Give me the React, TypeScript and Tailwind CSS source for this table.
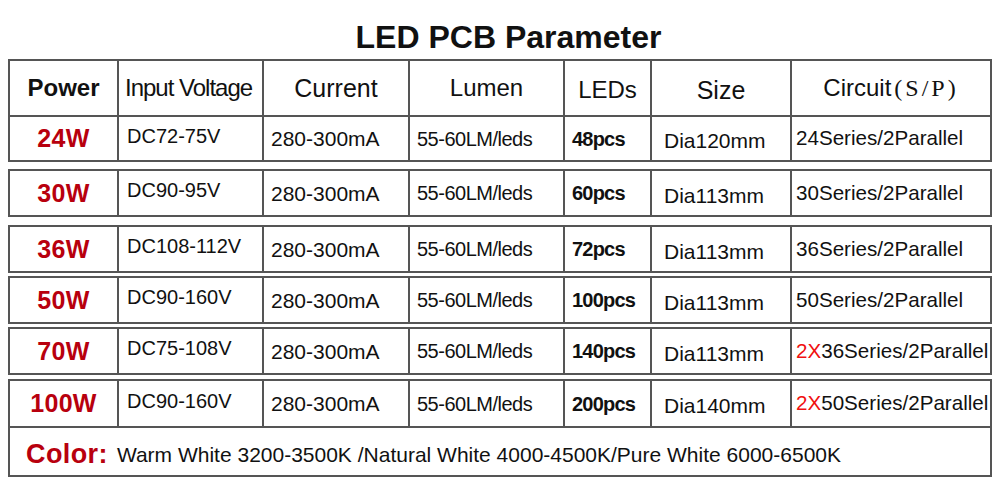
import React from "react";

type Row = { p: string; v: string; leds: string; size: string; c: string; x?: boolean };

const rows: Row[] = [
  { p: "24W", v: "DC72-75V", leds: "48pcs", size: "Dia120mm", c: "24Series/2Parallel" },
  { p: "30W", v: "DC90-95V", leds: "60pcs", size: "Dia113mm", c: "30Series/2Parallel" },
  { p: "36W", v: "DC108-112V", leds: "72pcs", size: "Dia113mm", c: "36Series/2Parallel" },
  { p: "50W", v: "DC90-160V", leds: "100pcs", size: "Dia113mm", c: "50Series/2Parallel" },
  { p: "70W", v: "DC75-108V", leds: "140pcs", size: "Dia113mm", c: "36Series/2Parallel", x: true },
  { p: "100W", v: "DC90-160V", leds: "200pcs", size: "Dia140mm", c: "50Series/2Parallel", x: true },
];

const gridCols = "grid grid-cols-[107px_145px_146px_155px_87px_140px_200px]";
const cell = "flex items-center border-l-2 border-[#555] overflow-hidden whitespace-nowrap";

function DataRow({ r, h }: { r: Row; h: string }) {
  return (
    <div className={`${gridCols} ${h}`}>
      <div className="flex items-center justify-center text-[25px] font-bold text-[#b8000e] leading-none tracking-[0.3px]">
        {r.p}
      </div>
      <div className={`${cell} pl-[8px] pb-[6px] text-[20px] leading-none`}>{r.v}</div>
      <div className={`${cell} pl-[7px] text-[21px] leading-none`}>280-300mA</div>
      <div className={`${cell} pl-[7px] text-[20px] tracking-[-0.5px] leading-none`}>55-60LM/leds</div>
      <div className={`${cell} pl-[7px] text-[20px] font-bold tracking-[-0.8px] leading-none`}>{r.leds}</div>
      <div className={`${cell} pl-[12px] pt-[4px] text-[21px] leading-none`}>{r.size}</div>
      <div className={`${cell} pl-[4px] text-[20.6px] leading-none`}>
        {r.x && <span className="text-[#f01010]">2X</span>}
        {r.c}
      </div>
    </div>
  );
}

export default function App() {
  const margins = ["", "mt-[7px]", "mt-[8px]", "mt-[3px]", "mt-[3px]", "mt-[4px]"];
  return (
    <div className="w-[1000px] h-[497px] bg-white text-[#111] font-['Liberation_Sans',Arial,sans-serif] overflow-hidden">
      <div className="h-[59px] pt-[21px] pl-[17px] text-center text-[32px] leading-[32px] font-bold">
        LED PCB Parameter
      </div>

      {/* Group 1: header + first row */}
      <div className="ml-[8px] w-[984px] border-2 border-[#555]">
        <div className={`${gridCols} h-[56px] border-b-2 border-[#555]`}>
          <div className="flex items-center justify-center text-[24px] font-bold leading-none">Power</div>
          <div className={`${cell} pl-[6px] text-[24px] tracking-[-1px] leading-none`}>Input Voltage</div>
          <div className={`${cell} justify-center text-[25px] leading-none`}>Current</div>
          <div className={`${cell} justify-center text-[24px] leading-none`}>Lumen</div>
          <div className={`${cell} justify-center pt-[4px] text-[24px] leading-none`}>LEDs</div>
          <div className={`${cell} justify-center pt-[4px] text-[25px] leading-none`}>Size</div>
          <div className={`${cell} justify-center text-[24px] leading-none`}>
            <span>Circuit</span>
            <span className="ml-[3px] font-['Liberation_Serif',serif] tracking-[3px]">(S/P)</span>
          </div>
        </div>
        <DataRow r={rows[0]} h="h-[43px]" />
      </div>

      {rows.slice(1, 5).map((r, i) => (
        <div key={r.p} className={`ml-[8px] w-[984px] border-2 border-[#555] ${margins[i + 1]}`}>
          <DataRow r={r} h="h-[44px]" />
        </div>
      ))}

      {/* Last group: final row + color */}
      <div className={`ml-[8px] w-[984px] border-2 border-[#555] ${margins[5]}`}>
        <div className="border-b-2 border-[#555]">
          <DataRow r={rows[5]} h="h-[45px]" />
        </div>
        <div className="h-[47px] flex items-center pl-[16px] pt-[6px] whitespace-nowrap">
          <span className="text-[27px] font-bold text-[#b8000e] leading-none tracking-[0.4px]">Color:</span>
          <span className="ml-[9px] text-[21px] leading-none">
            Warm White 3200-3500K /Natural White 4000-4500K/Pure White 6000-6500K
          </span>
        </div>
      </div>
    </div>
  );
}
